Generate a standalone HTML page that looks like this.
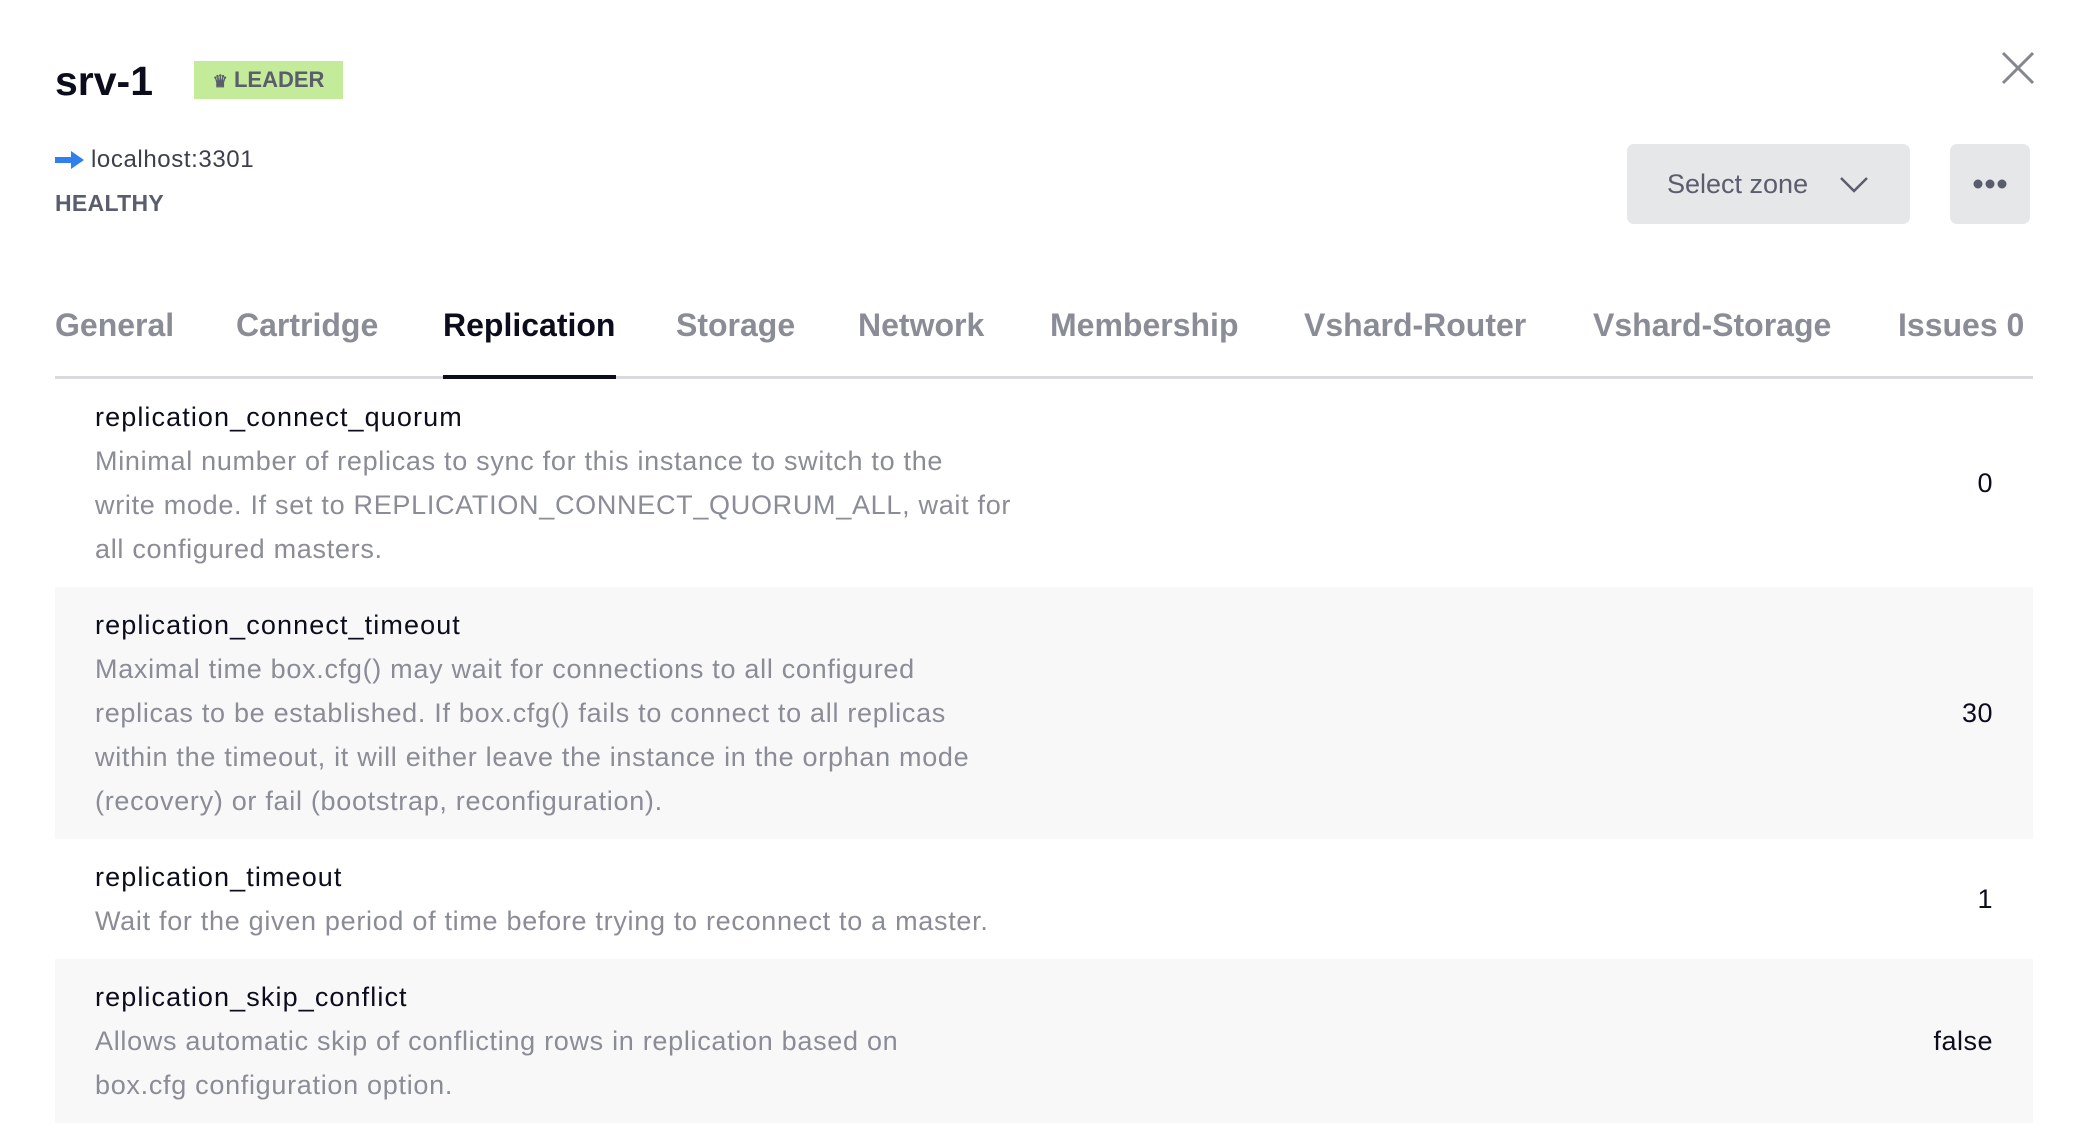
<!DOCTYPE html>
<html><head><meta charset="utf-8"><style>
*{margin:0;padding:0;box-sizing:border-box}
body{width:2084px;height:1134px;background:#fff;font-family:"Liberation Sans",sans-serif;position:relative;overflow:hidden}
.abs{position:absolute}
.title{left:55px;top:56px;font-size:41px;font-weight:bold;color:#0b0d1c;line-height:50px}
.badge{left:194px;top:61px;width:149px;height:38px;background:#c3eb9a;color:#5a5d6b;font-weight:bold;font-size:22px;line-height:38px;text-align:center}
.host{left:91px;top:146px;font-size:24px;color:#3c3f4c;line-height:28px;letter-spacing:0.6px}
.healthy{left:55px;top:189px;font-size:23px;font-weight:bold;color:#5a5d6b;line-height:28px;letter-spacing:0.3px}
.btn{background:#e6e7e9;border-radius:7px;top:144px;height:80px}
.sel{left:1627px;width:283px;font-size:27px;color:#5a5d6b;line-height:80px;padding-left:40px}
.more{left:1950px;width:80px}
.tab{top:305px;font-size:32px;font-weight:bold;color:#8a8c96;line-height:40px}
.rows{left:55px;top:379px;width:1978px}
.row{position:relative;padding:16px 40px;font-size:27px;line-height:44px}
.row.g{background:#f8f8f9}
.row .t{color:#0b0d1c;letter-spacing:1.1px}
.row .d{color:#8a8c96;white-space:nowrap;letter-spacing:0.7px}
.row .v{position:absolute;right:40px;top:50%;transform:translateY(-50%);color:#0b0d1c;letter-spacing:0.5px}
</style></head><body>
<div class="abs title">srv-1</div>
<div class="abs badge"><span style="font-size:17px">♛</span> LEADER</div>
<svg class="abs" style="left:55px;top:150px" width="29" height="20" viewBox="0 0 29 20"><path d="M0 7h16V1l13 9-13 9v-6H0z" fill="#2f80ed"/></svg>
<div class="abs host">localhost:3301</div>
<div class="abs healthy">HEALTHY</div>
<svg class="abs" style="left:2000px;top:50px" width="36" height="36" viewBox="0 0 36 36"><path d="M3 3L33 33M33 3L3 33" stroke="#85878f" stroke-width="3"/></svg>
<div class="abs btn sel">Select zone<svg style="position:absolute;left:212px;top:32px" width="30" height="18" viewBox="0 0 30 18"><path d="M2 2l13 13L28 2" stroke="#5a5d6b" stroke-width="2.5" fill="none"/></svg></div>
<div class="abs btn more"><svg style="position:absolute;left:22px;top:34px" width="36" height="12"><circle cx="6" cy="6" r="4.5" fill="#5a5d6b"/><circle cx="18" cy="6" r="4.5" fill="#5a5d6b"/><circle cx="30" cy="6" r="4.5" fill="#5a5d6b"/></svg></div>
<div class="abs tab" style="left:55px">General</div>
<div class="abs tab" style="left:236px">Cartridge</div>
<div class="abs tab" style="left:443px;color:#0b0d1c">Replication</div>
<div class="abs tab" style="left:676px">Storage</div>
<div class="abs tab" style="left:858px">Network</div>
<div class="abs tab" style="left:1050px">Membership</div>
<div class="abs tab" style="left:1304px">Vshard-Router</div>
<div class="abs tab" style="left:1593px">Vshard-Storage</div>
<div class="abs tab" style="left:1898px">Issues 0</div>
<div class="abs" style="left:55px;top:376px;width:1978px;height:3px;background:#d9dadd"></div>
<div class="abs" style="left:443px;top:375px;width:173px;height:4px;background:#0b0d1c"></div>
<div class="abs rows">
<div class="row"><div class="t">replication_connect_quorum</div><div class="d">Minimal number of replicas to sync for this instance to switch to the<br>write mode. If set to REPLICATION_CONNECT_QUORUM_ALL, wait for<br>all configured masters.</div><div class="v">0</div></div>
<div class="row g"><div class="t">replication_connect_timeout</div><div class="d">Maximal time box.cfg() may wait for connections to all configured<br>replicas to be established. If box.cfg() fails to connect to all replicas<br>within the timeout, it will either leave the instance in the orphan mode<br>(recovery) or fail (bootstrap, reconfiguration).</div><div class="v">30</div></div>
<div class="row"><div class="t">replication_timeout</div><div class="d">Wait for the given period of time before trying to reconnect to a master.</div><div class="v">1</div></div>
<div class="row g"><div class="t">replication_skip_conflict</div><div class="d">Allows automatic skip of conflicting rows in replication based on<br>box.cfg configuration option.</div><div class="v">false</div></div>
</div>
</body></html>
